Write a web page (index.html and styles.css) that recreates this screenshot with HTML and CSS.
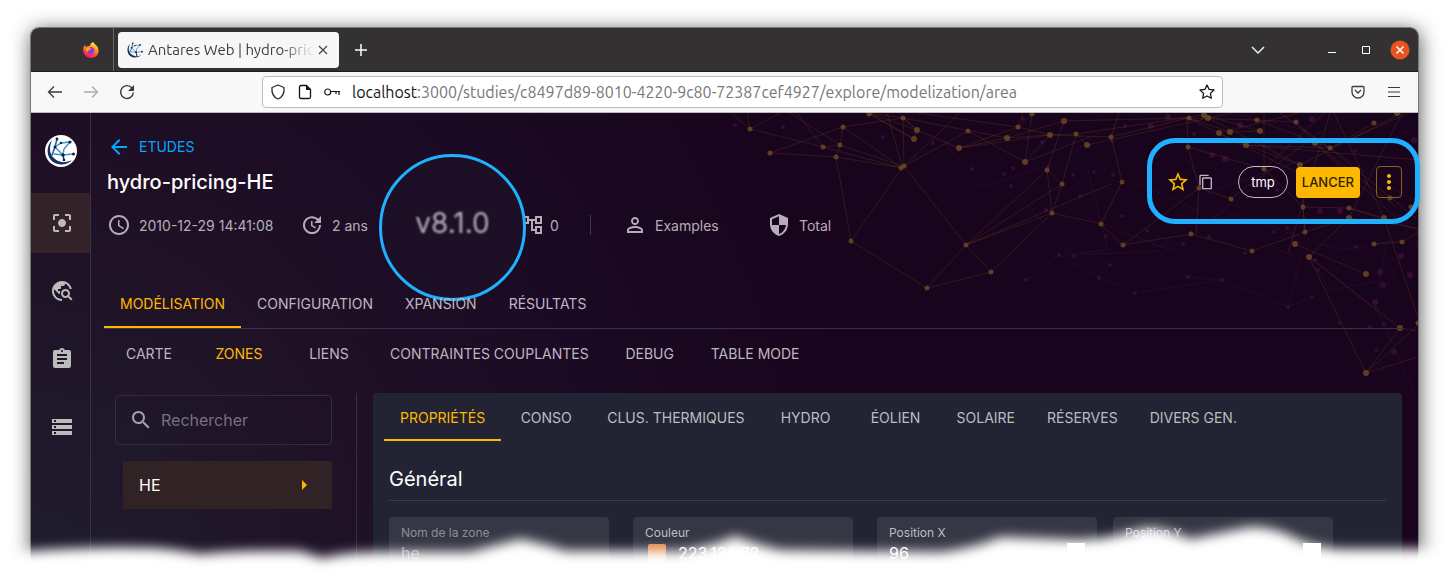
FILE: index.html
```html
<!DOCTYPE html>
<html lang="fr">
<head>
<meta charset="utf-8">
<title>Antares Web | hydro-pricing-HE</title>
<link rel="stylesheet" href="styles.css">
</head>
<body>
<svg class="defs" width="0" height="0" aria-hidden="true">
  <defs>
    <symbol id="antares" viewBox="0 0 32 32">
      <path d="M7 5C1 11 1 22 8 27c6 4 15 3 19-2-6 3-12 3-17-1C4 20 4 12 7 5z" fill="#12305f"/>
      <g fill="none" stroke-linecap="round">
        <path d="M12 4 10 12 7 20" stroke="#23619b" stroke-width="1.6"/>
        <path d="M10 12l6-4 9-1-6 7-1 6 10-1M10 12l8 8-9-1" stroke="#3e8fc8" stroke-width="1.4"/>
        <path d="M18 20l1 5" stroke="#12305f" stroke-width="1.4"/>
      </g>
      <g fill="#101f4b"><circle cx="12" cy="4" r="1.4"/><circle cx="10" cy="12" r="1.500"/><circle cx="25" cy="7" r="1.500"/><circle cx="16" cy="8" r="1.200"/><circle cx="18" cy="20" r="1.700"/><circle cx="28.500" cy="19" r="1.500"/><circle cx="19" cy="25" r="1.300"/></g>
    </symbol>
  </defs>
</svg>

<div class="window">
  <header class="titlebar">
    <div class="pinned">
      <svg width="18" height="18" viewBox="0 0 18 18" aria-hidden="true">
        <defs>
          <linearGradient id="fx" x1=".8" y1="0" x2=".3" y2="1"><stop offset="0" stop-color="#fff44f"/><stop offset=".4" stop-color="#ff980e"/><stop offset=".75" stop-color="#ff3647"/><stop offset="1" stop-color="#e31587"/></linearGradient>
          <linearGradient id="fy" x1="1" y1="0" x2="0" y2="1"><stop offset="0" stop-color="#b833e1"/><stop offset="1" stop-color="#5b4bd6"/></linearGradient>
        </defs>
        <path d="M11 1c1 2 4 3 5 6 2 6-2 10-7 10S1 13 1 8c0-2 1-3 2-4l1 2c1-1 2-1 4-1 0-2 1-3 3-4z" fill="url(#fx)"/>
        <circle cx="9" cy="9.500" r="3.500" fill="url(#fy)"/>
        <path d="M4 7c2-1 4-1 5 1-1 1-3 1-3 3-2-1-3-2-2-4z" fill="#ff9a2b"/>
      </svg>
    </div>
    <div class="tab">
      <svg width="18" height="18" aria-hidden="true"><use href="#antares"/></svg>
      <span class="tab-title">Antares Web | hydro-prici</span>
      <button class="plain" aria-label="Fermer l'onglet"><svg width="10" height="10" viewBox="0 0 10 10"><path d="M1 1l8 8M9 1L1 9" stroke="#444" stroke-width="1.200"/></svg></button>
    </div>
    <button class="plain new-tab" aria-label="Nouvel onglet"><svg width="14" height="14" viewBox="0 0 14 14"><path d="M7 1v12M1 7h12" stroke="#fff" stroke-width="1.500"/></svg></button>
    <div class="win-controls">
      <button class="plain list-tabs" aria-label="Lister les onglets"><svg width="14" height="10" viewBox="0 0 14 10"><path d="M1 2l6 6 6-6" fill="none" stroke="#eee" stroke-width="1.500"/></svg></button>
      <button class="plain" aria-label="Réduire"><svg width="10" height="10" viewBox="0 0 10 10"><path d="M1 7.500h8" stroke="#fff" stroke-width="1"/></svg></button>
      <button class="plain" aria-label="Agrandir"><svg width="10" height="10" viewBox="0 0 10 10"><path d="M1.500 1.500h7v7h-7z" fill="none" stroke="#fff"/></svg></button>
      <button class="plain" aria-label="Fermer"><svg width="20" height="20" viewBox="0 0 20 20"><circle cx="10" cy="10" r="9.500" fill="#e95420"/><path d="M6.500 6.500l7 7M13.500 6.500l-7 7" stroke="#fff" stroke-width="1.500"/></svg></button>
    </div>
  </header>

  <div class="toolbar">
    <div class="nav-buttons">
      <button class="plain" aria-label="Précédent"><svg width="16" height="16" viewBox="0 0 16 16"><path d="M15 8H2M7 2.500L1.500 8 7 13.500" fill="none" stroke="#3c3b3d" stroke-width="1.300"/></svg></button>
      <button class="plain" aria-label="Suivant"><svg width="16" height="16" viewBox="0 0 16 16"><path d="M1 8h13M9 2.500L14.500 8 9 13.500" fill="none" stroke="#aaa" stroke-width="1.300"/></svg></button>
      <button class="plain" aria-label="Actualiser"><svg width="16" height="16" viewBox="0 0 16 16"><path d="M13 4a6.400 6.400 0 1 0 1.400 4.500" fill="none" stroke="#3c3b3d" stroke-width="1.400"/><path d="M15 1v6H9z" fill="#3c3b3d"/></svg></button>
    </div>
    <div class="address">
      <svg width="16" height="16" viewBox="0 0 16 16" aria-hidden="true"><path d="M8 1l6 2.500c.5 5-1 9.500-6 11.500-5-2-6.500-6.500-6-11.500z" fill="none" stroke="#2b2a33" stroke-width="1.300" stroke-linejoin="round"/></svg>
      <svg width="14" height="16" viewBox="0 0 14 16" aria-hidden="true"><path d="M3 1.500h5.500l4 4V13q0 1.500-1.500 1.500H3q-1.500 0-1.500-1.500V3Q1.500 1.500 3 1.500z" fill="none" stroke="#15141a" stroke-width="1.300"/><path d="M8 1l5 5H8z" fill="#15141a"/></svg>
      <svg width="16" height="16" viewBox="0 0 16 16" aria-hidden="true"><circle cx="3.700" cy="8" r="3" fill="none" stroke="#15141a" stroke-width="1.200"/><path d="M7 7.500h9M15 8v3M12 8v2" fill="none" stroke="#15141a" stroke-width="1.200"/></svg>
      <span class="url"><b>localhost</b>:3000/studies/c8497d89-8010-4220-9c80-72387cef4927/explore/modelization/area</span>
      <button class="plain" aria-label="Marque-page"><svg width="16" height="16" viewBox="0 0 16 16"><path d="M8 1l2.100 4.400 4.900.6-3.600 3.400.9 4.900L8 12l-4.300 2.300.9-4.900L1 6l4.900-.6z" fill="none" stroke="#15141a" stroke-width="1.300" stroke-linejoin="round"/></svg></button>
    </div>
    <div class="tools">
      <button class="plain" aria-label="Pocket"><svg width="14" height="14" viewBox="0 0 14 14"><path d="M2 1.500h10q1 0 1 1V7A6 6 0 0 1 1 7V2.500q0-1 1-1z" fill="none" stroke="#3c3b3d" stroke-width="1.300"/><path d="M4 5l3 3 3-3" fill="none" stroke="#3c3b3d" stroke-width="1.300"/></svg></button>
      <button class="plain" aria-label="Menu"><svg width="12" height="12" viewBox="0 0 12 12"><path d="M0 1.500h12M0 6h12M0 10.500h12" stroke="#3c3b3d" stroke-width="1.200"/></svg></button>
    </div>
  </div>

  <div class="app">
    <svg class="network" width="688" height="280" viewBox="730 113 688 280" aria-hidden="true">
      <g fill="none" stroke="#6b2471" stroke-opacity=".16">
        <path d="M1011 186l35 40 28 29 84-4 30 26 34 3 66 27 24-10M1026 281l33-26 40 22 11-12M1099 277l36 16 87-13M1088 170l20 80-49 5M1180 150l40 60 120 40 60-10M1200 130l90 100 40 60 55-10M1377 304l24-45 10-60-50-30-60-40-90-20M1250 190l-80 60-90-35M1158 251l52-60 90-30M1374 302l40 90M1315 260l60 50 10-60M940 137l40 50 80-25 40-30M1130 180l90 40 80 40-12 48"/>
      </g>
      <g fill="#541050" fill-opacity=".5">
        <circle cx="735" cy="125" r="2"/><circle cx="783" cy="127" r="2"/><circle cx="883" cy="137" r="2"/><circle cx="933" cy="143" r="2"/><circle cx="972" cy="169" r="2"/><circle cx="1004" cy="174" r="2"/><circle cx="1011" cy="186" r="2"/><circle cx="1013" cy="168" r="2"/><circle cx="1023" cy="119" r="2"/><circle cx="1042" cy="142" r="2"/><circle cx="1046" cy="210" r="2"/><circle cx="1048" cy="167" r="2"/><circle cx="1073" cy="175" r="2"/><circle cx="1080" cy="196" r="2"/><circle cx="1094" cy="172" r="2"/><circle cx="1112" cy="141" r="2"/><circle cx="1113" cy="175" r="2"/><circle cx="1106" cy="236" r="2"/><circle cx="1122" cy="216" r="2"/><circle cx="1125" cy="126" r="2"/><circle cx="1151" cy="126" r="3"/><circle cx="1168" cy="117" r="3"/><circle cx="1194" cy="134" r="2"/><circle cx="1212" cy="155" r="3"/><circle cx="1225" cy="159" r="3"/><circle cx="1240" cy="125" r="3"/><circle cx="1312" cy="119" r="3"/><circle cx="1277" cy="190" r="2"/><circle cx="1340" cy="211" r="3"/><circle cx="1320" cy="211" r="3"/><circle cx="1355" cy="151" r="2"/><circle cx="1414" cy="140" r="3"/><circle cx="1059" cy="255" r="2"/><circle cx="1074" cy="256" r="2"/><circle cx="1110" cy="265" r="2"/><circle cx="1099" cy="278" r="2"/><circle cx="1135" cy="293" r="2"/><circle cx="1026" cy="280" r="2"/><circle cx="1188" cy="277" r="2"/><circle cx="1222" cy="280" r="2"/><circle cx="1147" cy="231" r="2"/><circle cx="1183" cy="244" r="2"/><circle cx="1209" cy="237" r="2"/><circle cx="1245" cy="253" r="2"/><circle cx="1274" cy="232" r="2"/><circle cx="1287" cy="228" r="2"/><circle cx="1288" cy="307" r="2"/><circle cx="1312" cy="297" r="2"/><circle cx="1318" cy="270" r="2"/><circle cx="1315" cy="260" r="2"/><circle cx="1356" cy="247" r="2"/><circle cx="1401" cy="256" r="3"/><circle cx="1410" cy="275" r="3"/><circle cx="1380" cy="272" r="3"/><circle cx="1383" cy="285" r="3"/><circle cx="1375" cy="302" r="3"/><circle cx="1339" cy="323" r="2"/><circle cx="1370" cy="327" r="2"/><circle cx="1384" cy="324" r="2"/><circle cx="1376" cy="350" r="2"/><circle cx="1394" cy="352" r="3"/>
      </g>
      <g fill="none" stroke="#8f5f22" stroke-opacity=".22">
        <path d="M732 113l18 16-3-16M750 129l30-16M750 129l73 18 17-2-50-32M770 153l66 4 66 11-79-21-26-34M770 153l73-26-3 18-4 12M843 127l60-9-34-5 45 26M843 127l59 41M840 145l62 21-15-53M836 157l15 84 76 47 64-16-25-27-62-79-1-48 14 12-3 9-45-25M851 241l51-73M904 166l55-52M904 166l64-35M869 113l48 17 42 18 91-13-32-8-101-14M917 130l-14-12 104 20 25-24M959 148l48-10 57-17M959 148l59-21 5-14M968 131l57 31 65-25M1007 138l43-3 61 2M1025 162l25-27 26-1 11 11M1025 162l7-48M1062 184l-15-14 17-49M1047 170l5 43 10-29 14-50M1047 170l-81 75 86-32-61 59M966 245l145-61M927 288l39-43 96-61M1052 213l49 11 22 21 68-11M1101 224l21-42-11-45 8-24M1123 245l76-57-11-41-1-29M1064 121l124-3 69 2 39 2M1076 134l128-19M1087 145l145-32M1111 137l77-19 120 60M1189 118l41 14 30-1-56-16M1208 118l92 47M1219 133l27 12 54 20M1246 145l85 3 43-25M1257 120l73 28 79-35M1296 122l19 21 81 64M1315 143l81 75M1188 147l76 22 39 38M1231 199l-32-11-3 46M1231 199l91-68M1303 207l2 25-5-67M1303 207l46 1 35 10M1349 218l-40 39M1349 218l53-105M1252 251l53-19 44-14M1191 234l61 17M1295 244l71 30M1309 257l91 71M1309 257l57 116 34-45 18 3M1366 373l52-48M1366 373l52-16M1349 218l70 10M1349 208l69 22 1 93M1374 244l28-2 16-10M1384 218l-50-105M1384 218l34 100M1280 113l50 35 88 72M1219 133l80-20M1246 145l172 15M1300 165l118-60M1330 113l-42 140M1264 113l0 56 60-56"/>
      </g>
      <g fill="#714b24" fill-opacity=".8">
        <circle cx="750" cy="129" r="2.500"/><circle cx="770" cy="153" r="2.500"/><circle cx="823" cy="147" r="2.500"/><circle cx="840" cy="145" r="2.500"/><circle cx="843" cy="127" r="2.500"/><circle cx="836" cy="157" r="2.500"/><circle cx="869" cy="114" r="2.500"/><circle cx="903" cy="118" r="2.500"/><circle cx="917" cy="130" r="3"/><circle cx="914" cy="139" r="3"/><circle cx="901" cy="168" r="2.500"/><circle cx="904" cy="166" r="2.500"/><circle cx="968" cy="131" r="2.500"/><circle cx="959" cy="148" r="3"/><circle cx="1007" cy="138" r="3"/><circle cx="1018" cy="127" r="2.500"/><circle cx="1032" cy="114" r="2.500"/><circle cx="1050" cy="135" r="3"/><circle cx="1025" cy="162" r="3"/><circle cx="1047" cy="170" r="2.500"/><circle cx="1062" cy="184" r="2.500"/><circle cx="1052" cy="213" r="2.500"/><circle cx="1064" cy="121" r="3"/><circle cx="1076" cy="134" r="2.500"/><circle cx="1087" cy="145" r="3"/><circle cx="1111" cy="137" r="2.500"/><circle cx="1101" cy="224" r="2.500"/><circle cx="851" cy="241" r="2.500"/><circle cx="966" cy="245" r="2.500"/><circle cx="991" cy="272" r="2.500"/><circle cx="927" cy="288" r="2.500"/>
        <circle cx="1189" cy="118" r="2.500"/><circle cx="1204" cy="115" r="3"/><circle cx="1208" cy="118" r="3"/><circle cx="1219" cy="133" r="3"/><circle cx="1230" cy="132" r="3"/><circle cx="1257" cy="120" r="2.500"/><circle cx="1260" cy="131" r="3"/><circle cx="1296" cy="122" r="2.500"/><circle cx="1374" cy="123" r="2.500"/><circle cx="1397" cy="113" r="3"/><circle cx="1188" cy="147" r="2.500"/><circle cx="1246" cy="145" r="3"/><circle cx="1315" cy="143" r="3"/><circle cx="1330" cy="148" r="2.500"/><circle cx="1300" cy="165" r="3"/><circle cx="1264" cy="169" r="2.500"/><circle cx="1122" cy="182" r="2.500"/><circle cx="1199" cy="188" r="2.500"/><circle cx="1231" cy="199" r="2.500"/><circle cx="1303" cy="207" r="2.500"/><circle cx="1349" cy="208" r="2.500"/><circle cx="1349" cy="218" r="3"/><circle cx="1384" cy="218" r="3"/><circle cx="1390" cy="198" r="2.500"/><circle cx="1411" cy="207" r="2.500"/><circle cx="1191" cy="234" r="2.500"/><circle cx="1123" cy="245" r="2.500"/><circle cx="1252" cy="251" r="2.500"/><circle cx="1305" cy="232" r="2.500"/><circle cx="1295" cy="244" r="3"/><circle cx="1309" cy="257" r="3"/><circle cx="1374" cy="244" r="2.500"/><circle cx="1402" cy="242" r="2.500"/><circle cx="1366" cy="274" r="3"/><circle cx="1400" cy="328" r="3"/><circle cx="1366" cy="373" r="3"/><circle cx="1418" cy="323" r="2.500"/>
      </g>
    </svg>

    <nav class="sidebar" aria-label="Navigation principale">
      <a class="logo" href="#" aria-label="Antares"><svg width="32" height="32"><use href="#antares"/></svg></a>
      <a class="side-item active" href="#" aria-label="Études"><svg width="24" height="24" viewBox="0 0 24 24"><path fill="currentColor" d="M5 15H3v4c0 1.100.9 2 2 2h4v-2H5v-4zM5 5h4V3H5c-1.100 0-2 .9-2 2v4h2V5zm14-2h-4v2h4v4h2V5c0-1.100-.9-2-2-2zm0 16h-4v2h4c1.100 0 2-.9 2-2v-4h-2v4zM12 8c-2.210 0-4 1.790-4 4s1.790 4 4 4 4-1.790 4-4-1.790-4-4-4z"/></svg></a>
      <a class="side-item" href="#" aria-label="Données"><svg width="24" height="24" viewBox="0 0 24 24"><path fill="currentColor" d="M19.300 16.900c.4-.7.700-1.500.700-2.400 0-2.500-2-4.500-4.500-4.500S11 12 11 14.500s2 4.500 4.500 4.500c.9 0 1.700-.3 2.400-.7l3.200 3.200 1.400-1.400-3.200-3.200zm-3.800.1c-1.400 0-2.500-1.100-2.500-2.500s1.100-2.500 2.500-2.500 2.500 1.100 2.500 2.500-1.100 2.500-2.500 2.500zM12 20v2C6.480 22 2 17.520 2 12S6.480 2 12 2c4.840 0 8.870 3.440 9.800 8h-2.070c-.64-2.460-2.400-4.470-4.730-5.410V5c0 1.100-.9 2-2 2h-2v2c0 .55-.45 1-1 1H8v2h2v3H9l-4.790-4.790C4.080 10.790 4 11.380 4 12c0 4.410 3.590 8 8 8z"/></svg></a>
      <a class="side-item" href="#" aria-label="Tâches"><svg width="24" height="24" viewBox="0 0 24 24"><path fill="currentColor" d="M19 3h-4.180C14.400 1.840 13.300 1 12 1c-1.300 0-2.400.84-2.820 2H5c-1.100 0-2 .9-2 2v14c0 1.100.9 2 2 2h14c1.100 0 2-.9 2-2V5c0-1.100-.9-2-2-2zm-7 0c.55 0 1 .45 1 1s-.45 1-1 1-1-.45-1-1 .45-1 1-1zm2 14H7v-2h7v2zm3-4H7v-2h10v2zm0-4H7V7h10v2z"/></svg></a>
      <a class="side-item" href="#" aria-label="Réglages"><svg width="24" height="24" viewBox="0 0 24 24"><path fill="currentColor" d="M2 20h20v-4H2v4zm2-3h2v2H4v-2zM2 4v4h20V4H2zm4 3H4V5h2v2zm-4 7h20v-4H2v4zm2-3h2v2H4v-2z"/></svg></a>
    </nav>

    <main class="main">
      <div class="study-head">
        <div class="identity">
          <a class="back" href="#"><svg width="24" height="24" viewBox="0 0 24 24"><path fill="currentColor" d="M20 11H7.830l5.590-5.590L12 4l-8 8 8 8 1.410-1.410L7.830 13H20v-2z"/></svg>ETUDES</a>
          <h1>hydro-pricing-HE</h1>
        </div>
        <div class="actions">
          <button class="plain gold" aria-label="Favori"><svg width="24" height="24" viewBox="0 0 24 24"><path fill="currentColor" d="M22 9.240l-7.190-.62L12 2 9.190 8.630 2 9.240l5.460 4.730L5.820 21 12 17.270 18.180 21l-1.630-7.030L22 9.240zM12 15.400l-3.760 2.270 1-4.280-3.320-2.880 4.380-.38L12 6.100l1.710 4.040 4.380.38-3.320 2.880 1 4.280L12 15.400z"/></svg></button>
          <button class="plain copy" aria-label="Copier"><svg width="16" height="16" viewBox="0 0 24 24"><path fill="currentColor" d="M16 1H4c-1.100 0-2 .9-2 2v14h2V3h12V1zm3 4H8c-1.100 0-2 .9-2 2v14c0 1.100.9 2 2 2h11c1.100 0 2-.9 2-2V7c0-1.100-.9-2-2-2zm0 16H8V7h11v14z"/></svg></button>
          <span class="chip">tmp</span>
          <button class="launch">LANCER</button>
          <button class="more" aria-label="Plus d'actions"><svg width="24" height="24" viewBox="0 0 24 24"><path fill="currentColor" d="M12 8c1.100 0 2-.9 2-2s-.9-2-2-2-2 .9-2 2 .9 2 2 2zm0 2c-1.100 0-2 .9-2 2s.9 2 2 2 2-.9 2-2-.9-2-2-2zm0 6c-1.100 0-2 .9-2 2s.9 2 2 2 2-.9 2-2-.9-2-2-2z"/></svg></button>
          <span class="highlight"></span>
        </div>
      </div>

      <div class="meta">
        <span class="meta-item date"><svg width="24" height="24" viewBox="0 0 24 24"><path fill="currentColor" d="M11.990 2C6.470 2 2 6.480 2 12s4.470 10 9.990 10C17.520 22 22 17.520 22 12S17.520 2 11.990 2zM12 20c-4.420 0-8-3.580-8-8s3.580-8 8-8 8 3.580 8 8-3.580 8-8 8zm.5-13H11v6l5.250 3.150.75-1.230-4.500-2.670V7z"/></svg>2010-12-29 14:41:08</span>
        <span class="meta-item age"><svg width="24" height="24" viewBox="0 0 24 24"><path fill="currentColor" d="M21 10.120h-6.780l2.740-2.820c-2.730-2.700-7.150-2.800-9.880-.1-2.730 2.710-2.730 7.080 0 9.790s7.150 2.710 9.880 0C18.320 15.650 19 14.080 19 12.100h2c0 1.980-.88 4.550-2.640 6.290-3.510 3.480-9.210 3.480-12.720 0-3.500-3.470-3.530-9.110-.02-12.580s9.140-3.470 12.650 0L21 3v7.120zM12.500 8v4.250l3.500 2.080-.72 1.210L11 13V8h1.500z"/></svg>2 ans</span>
        <span class="meta-item tree"><svg width="24" height="24" viewBox="0 0 24 24"><path fill="currentColor" d="M22 11V3h-7v3H9V3H2v8h7V8h2v10h4v3h7v-8h-7v3h-2V8h2v3h7zM7 9H4V5h3v4zm10 6h3v4h-3v-4zm0-10h3v4h-3V5z"/></svg>0<span class="lens"><span>v8.1.0</span></span></span>
        <span class="meta-item owner"><svg width="24" height="24" viewBox="0 0 24 24"><path fill="currentColor" d="M12 5.900c1.160 0 2.100.94 2.100 2.100s-.94 2.100-2.100 2.100S9.900 9.160 9.900 8s.94-2.100 2.100-2.100m0 9c2.970 0 6.100 1.460 6.100 2.100v1.100H5.900V17c0-.64 3.130-2.100 6.100-2.100M12 4C9.790 4 8 5.790 8 8s1.790 4 4 4 4-1.790 4-4-1.790-4-4-4zm0 9c-2.670 0-8 1.340-8 4v3h16v-3c0-2.660-5.330-4-8-4z"/></svg>Examples</span>
        <span class="meta-item rights"><svg width="24" height="24" viewBox="0 0 24 24"><path fill="currentColor" d="M12 1L3 5v6c0 5.550 3.840 10.740 9 12 5.160-1.260 9-6.450 9-12V5l-9-4zm0 10.990h7c-.53 4.120-3.280 7.790-7 8.940V12H5V6.300l7-3.110v8.800z"/></svg>Total</span>
      </div>

      <div class="tabs main-tabs" role="tablist">
        <button role="tab" class="on" aria-selected="true">MODÉLISATION</button><button role="tab">CONFIGURATION</button><button role="tab">XPANSION</button><button role="tab">RÉSULTATS</button>
      </div>
      <div class="tabs sub-tabs" role="tablist">
        <button role="tab">CARTE</button><button role="tab" class="on" aria-selected="true">ZONES</button><button role="tab">LIENS</button><button role="tab">CONTRAINTES COUPLANTES</button><button role="tab">DEBUG</button><button role="tab">TABLE MODE</button>
      </div>

      <div class="content">
        <aside class="areas">
          <label class="search"><svg width="24" height="24" viewBox="0 0 24 24" aria-hidden="true"><path fill="currentColor" d="M15.500 14h-.79l-.28-.27C15.410 12.590 16 11.110 16 9.500 16 5.910 13.090 3 9.500 3S3 5.910 3 9.500 5.910 16 9.500 16c1.610 0 3.090-.59 4.230-1.570l.27.28v.79l5 4.990L20.490 19l-4.990-5zm-6 0C7.010 14 5 11.990 5 9.500S7.010 5 9.500 5 14 7.010 14 9.500 11.990 14 9.500 14z"/></svg><input type="text" placeholder="Rechercher" aria-label="Rechercher"></label>
          <a class="area" href="#">HE<svg width="24" height="24" viewBox="0 0 24 24" aria-hidden="true"><path fill="#ffb800" d="M10 17l5-5-5-5v10z"/></svg></a>
        </aside>
        <section class="card">
          <div class="tabs card-tabs" role="tablist">
            <button role="tab" class="on" aria-selected="true">PROPRIÉTÉS</button><button role="tab">CONSO</button><button role="tab">CLUS. THERMIQUES</button><button role="tab">HYDRO</button><button role="tab">ÉOLIEN</button><button role="tab">SOLAIRE</button><button role="tab">RÉSERVES</button><button role="tab">DIVERS GEN.</button>
          </div>
          <h2>Général</h2>
          <div class="fields">
            <div class="field dim"><label for="nom">Nom de la zone</label><div class="value"><input id="nom" type="text" value="he"></div></div>
            <div class="field"><label for="couleur">Couleur</label><div class="value"><span class="swatch"></span><input id="couleur" type="text" value="223,136,72"></div></div>
            <div class="pair">
              <div class="field"><label for="px">Position X</label><div class="value"><input id="px" type="text" value="96"><span class="spin"></span></div></div>
              <div class="field"><label for="py">Position Y</label><div class="value"><input id="py" type="text" value="45"><span class="spin"></span></div></div>
            </div>
          </div>
        </section>
      </div>
    </main>
  </div>
</div>

<svg class="fade" viewBox="0 0 1453 82" preserveAspectRatio="none" aria-hidden="true">
  <defs><filter id="soft" x="-5%" y="-50%" width="110%" height="200%"><feGaussianBlur stdDeviation="6"/></filter></defs>
  <path filter="url(#soft)" fill="#fff" d="M-40 51L30 51Q100 46 155 48Q180 50 200 54Q240 50 300 51L322 58Q345 52 380 52L470 52Q500 44 520 39Q550 45 565 51L680 51Q715 46 735 36Q755 44 780 50L940 52Q975 48 1000 37L1080 40Q1120 37 1145 28Q1170 29 1190 39Q1220 33 1250 27Q1275 27 1295 38Q1315 48 1340 49L1500 49V130H-40z"/>
</svg>
</body>
</html>
```

FILE: styles.css
```css
* { box-sizing: border-box; }

body {
  margin: 0;
  padding: 28px 35px 0 31px;
  height: 100vh;
  overflow: hidden;
  position: relative;
  background: #fff;
  font-family: Inter, sans-serif;
  font-size: 14px;
  color: #fff;
}

.defs { position: absolute; }
svg { display: block; flex: none; }
a { color: inherit; text-decoration: none; }
button, input { font: inherit; color: inherit; }
input { border: 0; padding: 0; background: none; min-width: 0; outline: 0; }

.plain {
  display: flex;
  align-items: center;
  justify-content: center;
  padding: 0;
  border: 0;
  background: none;
}

.window {
  display: flex;
  flex-direction: column;
  min-height: 100%;
  border-radius: 8px 8px 0 0;
  box-shadow: 0 0 0 1px #777, 1px 3px 20px 1px rgba(0, 0, 0, .65);
}

/* Browser chrome */
.titlebar {
  display: flex;
  align-items: center;
  height: 44px;
  border-radius: 8px 8px 0 0;
  border-bottom: 1px solid #1c1b1b;
  background: #333131;
  font-family: Ubuntu, "Noto Sans", sans-serif;
}
.pinned {
  display: flex;
  align-items: center;
  justify-content: flex-end;
  align-self: stretch;
  width: 83px;
  padding-right: 13px;
  border-right: 1px solid #666;
}
.tab {
  display: flex;
  align-items: center;
  gap: 4px;
  width: 221px;
  height: 36px;
  margin-left: 4px;
  padding: 0 11px 0 8px;
  border-radius: 4px;
  background: #f7f7f7;
  color: #3d3c3e;
}
.tab-title {
  flex: 1;
  min-width: 0;
  font-size: 15px;
  line-height: 20px;
  white-space: nowrap;
  -webkit-mask-image: linear-gradient(90deg, #000 80%, transparent);
  mask-image: linear-gradient(90deg, #000 80%, transparent);
}
.new-tab { margin-left: 15px; }
.win-controls {
  display: flex;
  align-items: center;
  gap: 24px;
  margin-left: auto;
  padding-right: 8px;
}
.list-tabs { margin-right: 38px; }
.win-controls .plain:last-child { margin-left: -5px; }

.toolbar {
  display: flex;
  align-items: center;
  height: 41px;
  padding: 0 18px 0 16px;
  border-bottom: 1px solid #bbb;
  background: #f8f8f8;
}
.nav-buttons { display: flex; gap: 20px; }
.address {
  display: flex;
  align-items: center;
  gap: 12px;
  flex: 1;
  height: 32px;
  margin: 0 128px 0 127px;
  padding: 0 7px;
  border: 1px solid #bdbdbd;
  border-radius: 4px;
  background: #fff;
  font-family: Ubuntu, "Noto Sans", sans-serif;
  color: #77767a;
}
.url { flex: 1; font-size: 16px; white-space: nowrap; }
.url b { font-weight: 400; color: #15141a; }
.tools { display: flex; align-items: center; gap: 23px; }

/* Application */
.app {
  display: flex;
  flex: 1;
  position: relative;
  background:
    radial-gradient(ellipse 100% 1500px at 0% 100%, #1e1d2d 0%, #1f172a 12%, #1f1026 26%, #1b0a23 42%, #19041d 60%);
}
.network { position: absolute; top: 0; right: 0; }
.sidebar {
  flex: none;
  width: 60px;
  border-right: 1px solid #3a3145;
  color: #bbb;
}
.logo {
  display: flex;
  width: 32px;
  height: 32px;
  margin: 22px 14px 26px;
  border-radius: 50%;
  background: #fff;
  color: #fff;
}
.side-item {
  display: flex;
  align-items: center;
  justify-content: center;
  height: 60px;
  margin-bottom: 8px;
  padding-left: 2px;
}
.side-item.active { background: #332329; }

.main {
  display: flex;
  flex-direction: column;
  flex: 1;
  min-width: 0;
  position: relative;
  padding: 22px 16px 0 13px;
}
.study-head {
  display: flex;
  align-items: center;
  justify-content: space-between;
  height: 60px;
  padding-left: 3px;
}
.back {
  display: flex;
  align-items: center;
  gap: 8px;
  height: 24px;
  color: #00a8ff;
}
h1 {
  margin: 9px 0 0;
  font-size: 20px;
  line-height: 28px;
  font-weight: 500;
}
.actions {
  display: flex;
  align-items: center;
  position: relative;
  padding-top: 34px;
}
.gold { color: #ffb800; }
.copy { margin: 0 24px 0 8px; color: #bdb4c0; }
.chip {
  padding: 0 12px;
  border: 1px solid #c3bbc6;
  border-radius: 16px;
  font-size: 13px;
  line-height: 30px;
}
.launch {
  height: 31px;
  margin: 0 16px 0 8px;
  padding: 0 6px;
  border: 0;
  border-radius: 4px;
  background: #ffb800;
  color: #2d2205;
  font-size: 13px;
  font-weight: 500;
}
.more {
  display: flex;
  align-items: center;
  justify-content: center;
  width: 26px;
  height: 32px;
  padding: 0;
  border: 1px solid #8a6212;
  border-radius: 4px;
  background: none;
  color: #ffb800;
}
.highlight {
  position: absolute;
  inset: 6px -18px -26px -19px;
  border: 5px solid #1fb0ff;
  border-radius: 28px;
  pointer-events: none;
}

.meta {
  display: flex;
  align-items: center;
  height: 28px;
  margin-top: 16px;
  padding-left: 3px;
  color: #b5aeb9;
}
.meta-item { display: flex; align-items: center; gap: 8px; }
.date { width: 193px; }
.age { width: 220px; }
.tree {
  position: relative;
  gap: 6px;
  width: 71px;
  height: 20px;
  border-right: 1px solid #44364b;
}
.owner { width: 144px; margin-left: 32px; }
.lens {
  display: flex;
  align-items: center;
  justify-content: center;
  position: absolute;
  left: -141px;
  top: -61px;
  width: 147px;
  height: 147px;
  padding-bottom: 10px;
  border: 3px solid #1fb0ff;
  border-radius: 50%;
  background: #1d0f25;
  color: #b7b0ba;
  font-size: 28px;
}
.lens span { filter: blur(1px); }

.tabs { display: flex; position: relative; }
.tabs button {
  flex: none;
  min-width: 90px;
  height: 48px;
  padding: 0 16px;
  border: 0;
  border-bottom: 2px solid transparent;
  background: none;
  color: #bdb7c0;
}
.tabs button.on { color: #ffb800; }
.main-tabs { margin-top: 41px; border-bottom: 1px solid #3f2f46; }
.main-tabs .on, .card-tabs button.on { border-bottom-color: #ffb800; }
.sub-tabs button, .card-tabs button { padding-top: 2px; }

.content {
  display: flex;
  flex: 1;
  margin-top: 16px;
}
.areas {
  display: flex;
  flex-direction: column;
  gap: 16px;
  width: 253px;
  padding: 2px 24px 0 11px;
  border-right: 1px solid #3a2f42;
}
.search {
  display: flex;
  align-items: center;
  gap: 8px;
  height: 50px;
  padding: 0 13px;
  border: 1px solid #352c40;
  border-radius: 4px;
  color: #a5a0aa;
  font-size: 16px;
}
.search input { width: 100%; }
.search input::placeholder { color: #777080; opacity: 1; }
.area {
  display: flex;
  align-items: center;
  justify-content: space-between;
  height: 48px;
  margin-left: 8px;
  padding: 0 16px;
  background: #312226;
  font-size: 16px;
}
.card {
  flex: 1;
  min-width: 0;
  margin-left: 16px;
  padding: 0 16px;
  border-radius: 4px;
  background: #222333;
}
.card-tabs { margin-left: -5px; }
.card-tabs button { color: #bcbcc2; }
h2 {
  margin: 23px 0 16px;
  padding-bottom: 6px;
  border-bottom: 1px solid #3b3c4a;
  font-size: 20px;
  line-height: 30px;
  font-weight: 400;
}
.fields { display: flex; gap: 24px; }
.pair { display: flex; gap: 16px; }
.field {
  width: 220px;
  height: 56px;
  padding: 8px 12px;
  border-radius: 4px 4px 0 0;
  background: #363744;
  color: #fff;
}
.field label { display: block; font-size: 12px; line-height: 16px; color: #bdbdc3; }
.dim label { color: #8e8e97; }
.value {
  display: flex;
  align-items: center;
  height: 24px;
  font-size: 16px;
}
.value input { flex: 1; }
.dim input { color: #9c9ca4; }
.swatch { width: 18px; height: 18px; margin: 0 12px 0 3px; border-radius: 2px; background: #df8848; }
.spin { width: 18px; height: 20px; background: #fff; }

.fade {
  position: absolute;
  left: 0;
  right: 0;
  bottom: 0;
  width: 100%;
  height: 82px;
  overflow: hidden;
  pointer-events: none;
}
```
